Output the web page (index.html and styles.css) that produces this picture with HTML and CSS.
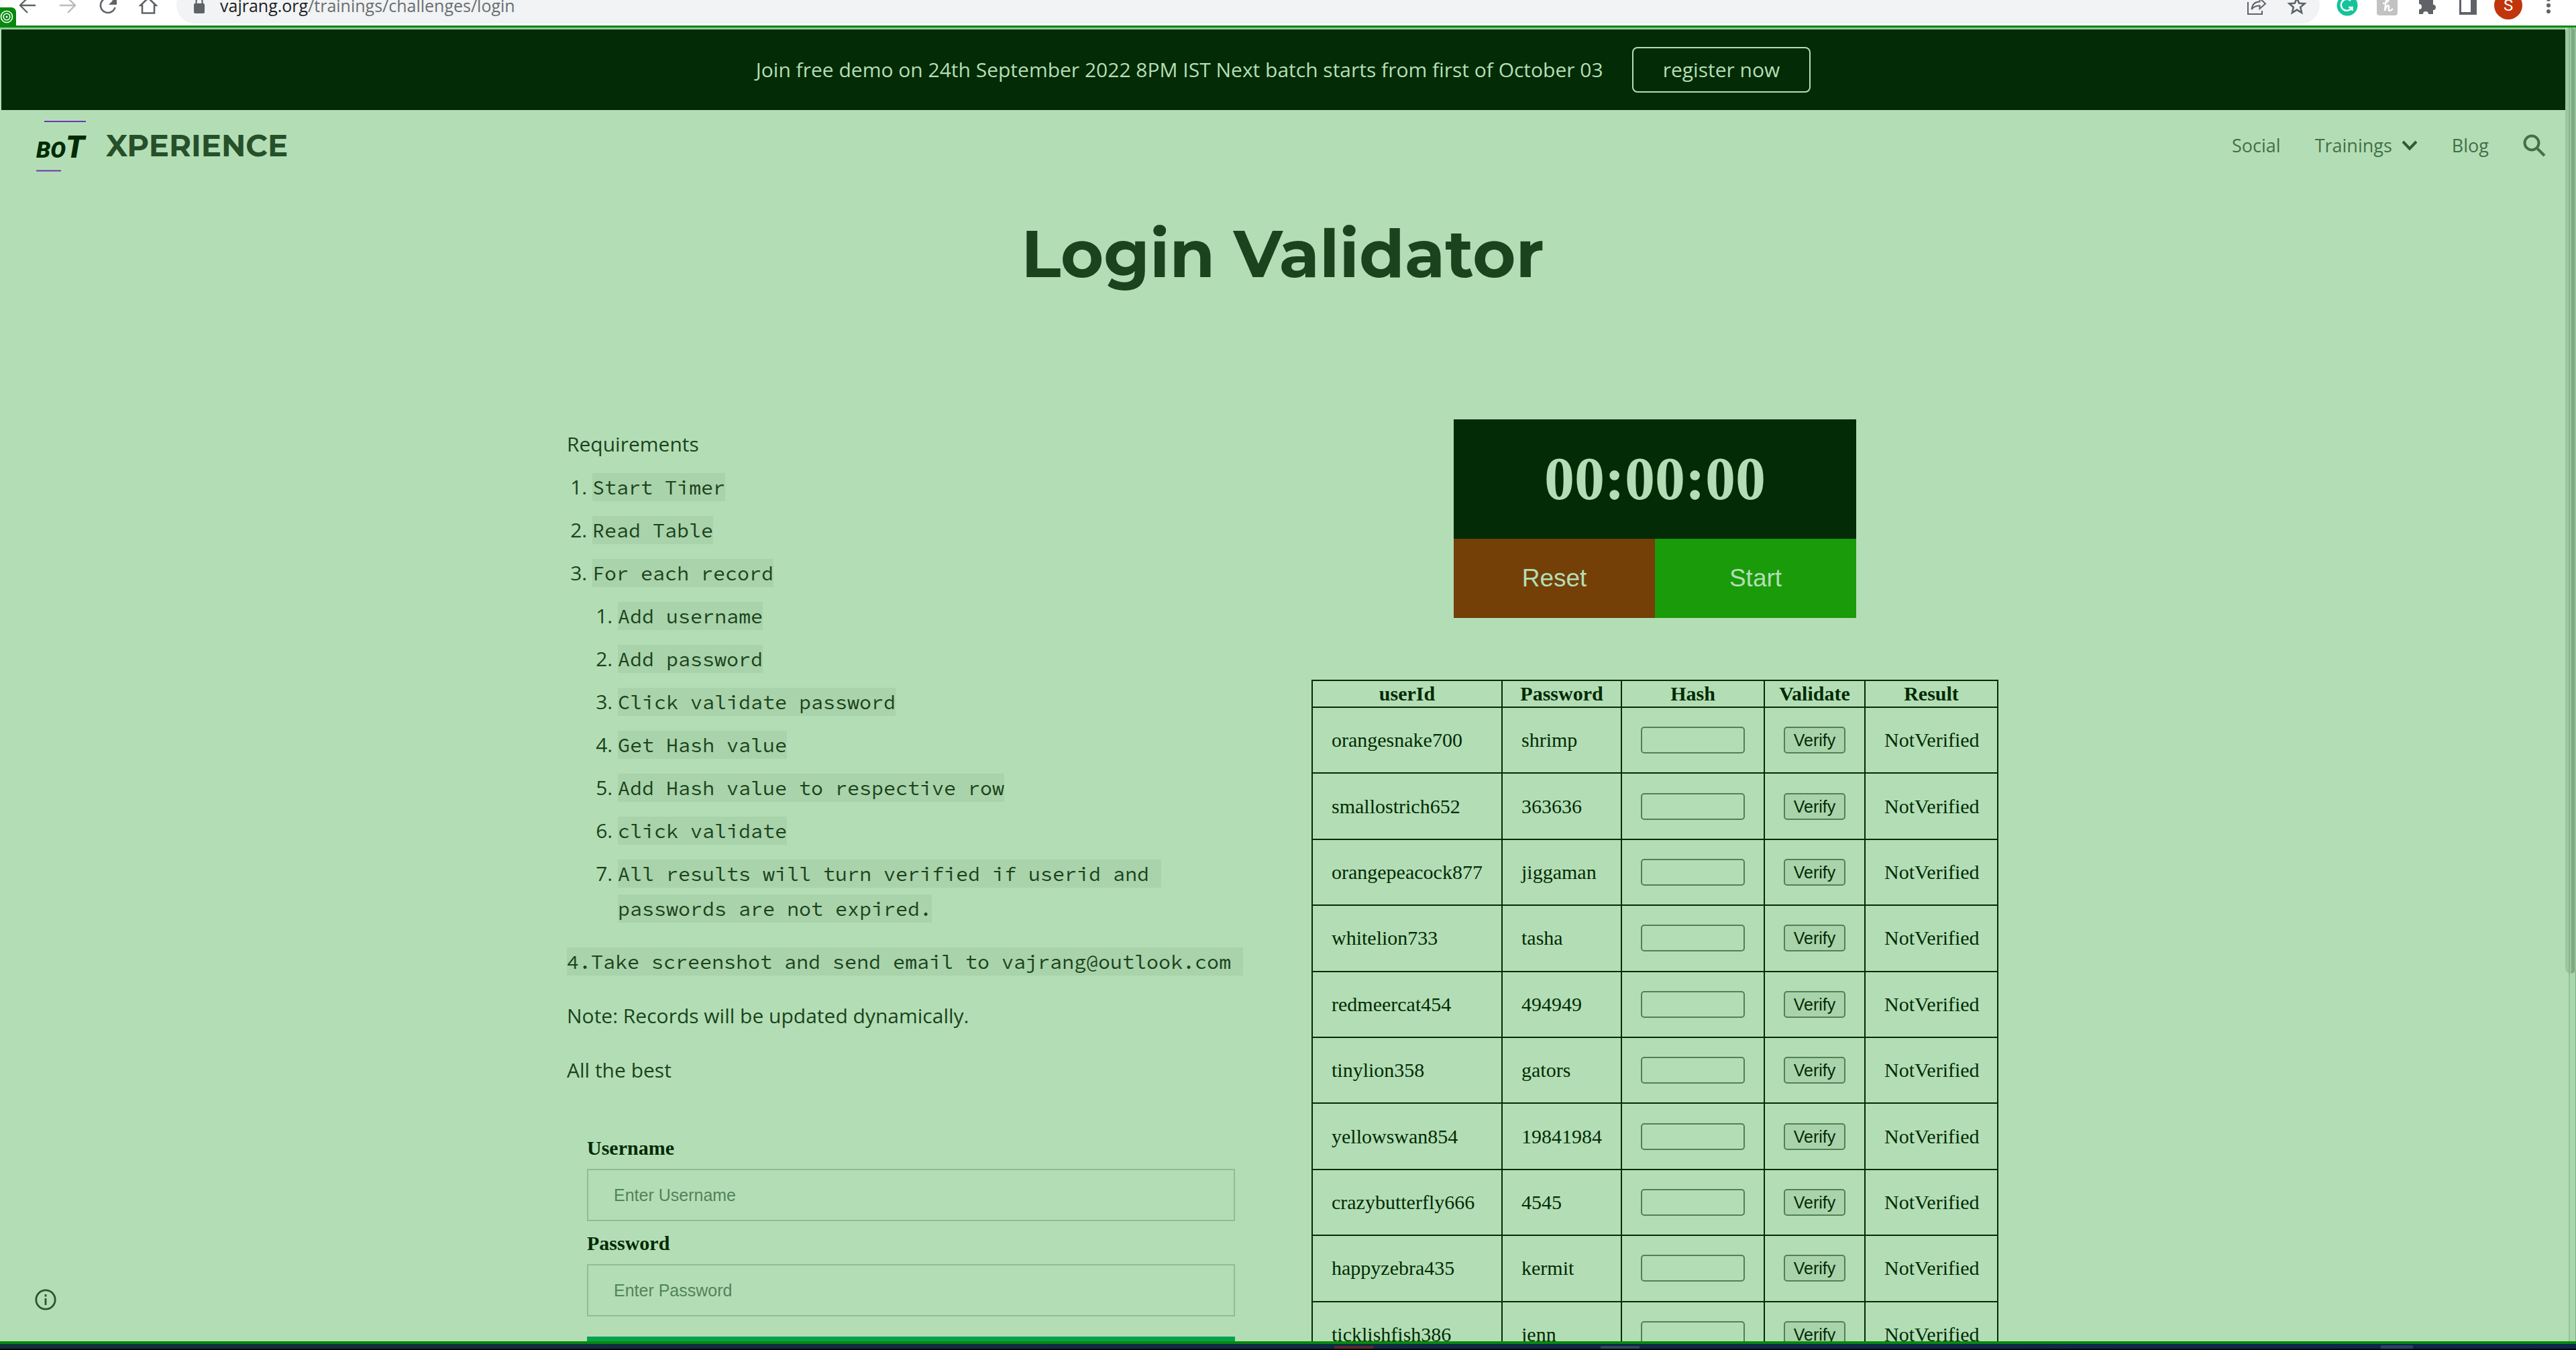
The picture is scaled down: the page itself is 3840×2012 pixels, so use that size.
FILE: index.html
```html
<!DOCTYPE html>
<html lang="en">
<head>
<meta charset="utf-8">
<title>Login Validator</title>
<link rel="stylesheet" href="styles.css">
</head>
<body>
<div class="toolbar">
  <button class="tool" aria-label="Back"><svg width="28" height="28" viewBox="0 0 28 28" fill="none" stroke="#5f6368" stroke-width="2.4"><path d="M26 14H4M14 3L3 14l11 11"/></svg></button>
  <button class="tool" aria-label="Forward"><svg width="28" height="28" viewBox="0 0 28 28" fill="none" stroke="#babcbe" stroke-width="2.4"><path d="M2 14h22M14 3l11 11-11 11"/></svg></button>
  <button class="tool" aria-label="Reload"><svg width="28" height="28" viewBox="0 0 28 28"><path d="M24.500 17A11 11 0 1 1 21.500 6" fill="none" stroke="#5f6368" stroke-width="2.600"/><path d="M27 1v12H15z" fill="#5f6368"/></svg></button>
  <button class="tool" aria-label="Home"><svg width="28" height="28" viewBox="0 0 28 28" fill="none" stroke="#5f6368" stroke-width="2.600"><path d="M2.500 14L14 3l11.500 11H23v11.500H5V14z"/></svg></button>
  <div class="omnibox">
    <svg width="16" height="26" viewBox="0 0 16 26"><path d="M3.500 11V7a4.500 4.500 0 0 1 9 0v4" fill="none" stroke="#5f6368" stroke-width="2.200"/><rect y="10" width="16" height="15" rx="2" fill="#5f6368"/></svg>
    <span class="url">vajrang.org<span class="path">/trainings/challenges/login</span></span>
    <button class="tool" aria-label="Share"><svg width="30" height="30" viewBox="0 0 30 30" fill="none" stroke="#5f6368" stroke-width="2"><path d="M2 10v18h21v-5"/><path d="M7.500 21c1-8 5-11.500 12-11.500V4.500l8.500 8-8.500 7.500v-4.500c-6 0-9.500 2-12 5.500z"/></svg></button>
    <button class="tool" aria-label="Bookmark"><svg width="30" height="30" viewBox="0 0 30 30" fill="none" stroke="#5f6368" stroke-width="2.600"><path d="M15 4l3.200 7.700 8.300.7-6.300 5.400 1.900 8.200-7.100-4.400-7.100 4.400 1.900-8.200-6.300-5.400 8.300-.7z"/></svg></button>
  </div>
  <button class="tool" aria-label="Grammar checker"><svg width="32" height="32" viewBox="0 0 32 32"><circle cx="16" cy="16" r="15.500" fill="#15c39a"/><path d="M21 9a8.500 8.500 0 1 0 2 10h-5m5.500 5v-5.500" fill="none" stroke="#fff" stroke-width="2.400"/></svg></button>
  <button class="tool" aria-label="Coupons"><svg width="32" height="32" viewBox="0 0 32 32"><rect width="31" height="31" rx="4" fill="#c2c2c2"/><path d="M9 13c7 0 10-5 8-7-3-2-4 8-5 18 2-7 5-9 6-7s-2 7 1 7c2 0 3-1 5-3" fill="none" stroke="#fff" stroke-width="2.400"/></svg></button>
  <button class="tool" aria-label="Extensions"><svg width="28" height="28" viewBox="0 0 28 28"><path d="M1 6h6a4 4 0 0 1 9 0h6v7a4 4 0 0 1 0 8v6h-7a4 4 0 0 0-8 0H1v-7a4 4 0 0 0 0-8z" fill="#5f6368"/></svg></button>
  <button class="tool" aria-label="Side panel"><svg width="26" height="28" viewBox="0 0 26 28"><path fill="#5f6368" fill-rule="evenodd" d="M0 0h26v28H0zM3 3v21h14V3z"/></svg></button>
  <button class="tool" aria-label="Profile"><span class="avatar">S</span></button>
  <button class="tool" aria-label="Menu"><svg width="6" height="26" viewBox="0 0 6 26" fill="#5f6368"><circle cx="3" cy="4" r="3"/><circle cx="3" cy="13" r="3"/><circle cx="3" cy="22" r="3"/></svg></button>
</div>
<div class="badge"><svg width="20" height="20" viewBox="0 0 20 20" fill="none" stroke="#fff" stroke-width="1.600"><circle cx="10" cy="10" r="8.500"/><circle cx="10" cy="10" r="4.800"/><circle cx="10" cy="10" r="1.500" fill="#fff" stroke="none"/></svg></div>
<div class="frame">
  <div class="page">
    <div class="banner">
      <span>Join free demo on 24th September 2022 8PM IST Next batch starts from first of October 03</span>
      <a class="register" href="#">register now</a>
    </div>
    <header class="header">
      <a class="brand" href="#">
        <svg width="78" height="78" viewBox="0 0 78 78"><path d="M13 3h62M1 76.500h37" stroke="#7332b4" stroke-width="2"/><text class="logo-text" x="1" y="57" font-size="34">BO<tspan font-size="46">T</tspan></text></svg>
        <span>XPERIENCE</span>
      </a>
      <nav class="nav">
        <a href="#">Social</a>
        <a href="#">Trainings<svg width="24" height="16" viewBox="0 0 24 16" fill="none" stroke="#2f5d33" stroke-width="4"><path d="M2 2l10 10.500L22 2"/></svg></a>
        <a href="#">Blog</a>
        <button class="search" aria-label="Search"><svg width="34" height="34" viewBox="0 0 34 34" fill="none" stroke="#456f48" stroke-width="4"><circle cx="13" cy="13" r="10.500"/><path d="M20.500 20.500L32 32"/></svg></button>
      </nav>
    </header>
    <h1 class="title">Login Validator</h1>
    <main class="content">
      <section class="requirements">
        <p class="lead">Requirements</p>
        <ol class="steps">
          <li><code>Start Timer</code></li>
          <li><code>Read Table</code></li>
          <li><code>For each record</code>
            <ol class="steps">
              <li><code>Add username</code></li>
              <li><code>Add password</code></li>
              <li><code>Click validate password</code></li>
              <li><code>Get Hash value</code></li>
              <li><code>Add Hash value to respective row</code></li>
              <li><code>click validate</code></li>
              <li><code>All results will turn verified if userid and passwords are not expired.</code></li>
            </ol>
          </li>
        </ol>
        <p><code>4.Take screenshot and send email to vajrang@outlook.com </code></p>
        <p>Note: Records will be updated dynamically.</p>
        <p>All the best</p>
        <form class="login">
          <label for="username">Username</label>
          <input id="username" type="text" placeholder="Enter Username">
          <label for="password">Password</label>
          <input id="password" type="password" placeholder="Enter Password">
          <button type="button" aria-label="Validate password"></button>
        </form>
      </section>
      <section class="records">
        <div class="timer">
          <div class="clock">00:00:00</div>
          <div class="controls"><button class="reset">Reset</button><button class="start">Start</button></div>
        </div>
        <table class="users">
          <colgroup><col class="c-user"><col class="c-pass"><col class="c-hash"><col class="c-validate"><col class="c-result"></colgroup>
          <thead><tr><th>userId</th><th>Password</th><th>Hash</th><th>Validate</th><th>Result</th></tr></thead>
          <tbody>
            <tr><td>orangesnake700</td><td>shrimp</td><td><input type="text" aria-label="Hash"></td><td><button>Verify</button></td><td>NotVerified</td></tr>
            <tr><td>smallostrich652</td><td>363636</td><td><input type="text" aria-label="Hash"></td><td><button>Verify</button></td><td>NotVerified</td></tr>
            <tr><td>orangepeacock877</td><td>jiggaman</td><td><input type="text" aria-label="Hash"></td><td><button>Verify</button></td><td>NotVerified</td></tr>
            <tr><td>whitelion733</td><td>tasha</td><td><input type="text" aria-label="Hash"></td><td><button>Verify</button></td><td>NotVerified</td></tr>
            <tr><td>redmeercat454</td><td>494949</td><td><input type="text" aria-label="Hash"></td><td><button>Verify</button></td><td>NotVerified</td></tr>
            <tr><td>tinylion358</td><td>gators</td><td><input type="text" aria-label="Hash"></td><td><button>Verify</button></td><td>NotVerified</td></tr>
            <tr><td>yellowswan854</td><td>19841984</td><td><input type="text" aria-label="Hash"></td><td><button>Verify</button></td><td>NotVerified</td></tr>
            <tr><td>crazybutterfly666</td><td>4545</td><td><input type="text" aria-label="Hash"></td><td><button>Verify</button></td><td>NotVerified</td></tr>
            <tr><td>happyzebra435</td><td>kermit</td><td><input type="text" aria-label="Hash"></td><td><button>Verify</button></td><td>NotVerified</td></tr>
            <tr><td>ticklishfish386</td><td>jenn</td><td><input type="text" aria-label="Hash"></td><td><button>Verify</button></td><td>NotVerified</td></tr>
          </tbody>
        </table>
      </section>
    </main>
    <button class="info" aria-label="Page information"><svg width="32" height="32" viewBox="0 0 32 32" fill="none" stroke="#2a552e" stroke-width="2.800"><circle cx="16" cy="16" r="14.200"/><path d="M16 14v10M16 8v3.500"/></svg></button>
  </div>
  <div class="scrollbar"><div class="thumb"></div></div>
</div>
<div class="taskbar"></div>
</body>
</html>
```
FILE: styles.css
```css
* { box-sizing: border-box; }

body {
  margin: 0;
  height: 100vh;
  display: flex;
  flex-direction: column;
  overflow: hidden;
  position: relative;
  background: #b3deb5;
  color: #1b431d;
  font: 30px/52px "Open Sans", sans-serif;
}

button { border: 0; padding: 0; background: none; font: inherit; color: inherit; }
a { color: inherit; text-decoration: none; }
svg { display: block; flex: none; }
p { margin: 0 0 29px; }

/* Browser toolbar, scrolled partly off the top edge */
.toolbar {
  flex: none;
  display: flex;
  align-items: center;
  height: 60px;
  margin-top: -22px;
  padding: 0 11px;
  background: #fff;
}
.tool { flex: none; width: 60px; height: 60px; display: flex; align-items: center; justify-content: center; }
.omnibox {
  flex: 1;
  display: flex;
  align-items: center;
  height: 54px;
  margin: 0 11px 0 12px;
  padding: 0 4px 0 26px;
  border-radius: 27px;
  background: #f1f3f4;
}
.url { flex: 1; margin-left: 23px; color: #202124; font-size: 25px; }
.path { color: #6a6e72; }
.avatar { width: 42px; height: 42px; border-radius: 50%; background: #c0350c; color: #fff; font: 24px/42px Roboto, sans-serif; text-align: center; }
.badge {
  position: absolute;
  left: 0;
  top: 11px;
  width: 24px;
  height: 28px;
  padding-top: 4px;
  border-radius: 0 7px 0 0;
  background: #078a0c;
}

/* Highlighted browser window */
.frame {
  flex: 1;
  min-height: 0;
  display: flex;
  border-top: 3px solid #078a0c;
  overflow: hidden;
}
.page { flex: 1; position: relative; border-top: 3px solid #93c79b; overflow: hidden; }

.banner {
  display: flex;
  align-items: center;
  justify-content: center;
  gap: 43px;
  height: 120px;
  margin-left: 2px;
  background: #032b05;
  color: #b3deb5;
  font-size: 30px;
}
.register {
  height: 68px;
  padding: 0 44px;
  border: 2px solid #b3deb5;
  border-radius: 8px;
  line-height: 64px;
}

.header {
  display: flex;
  align-items: center;
  justify-content: space-between;
  height: 106px;
  padding: 0 29px 0 53px;
}
.brand { display: flex; align-items: center; gap: 27px; color: #26502a; font: 700 45px/60px Montserrat, Inter, sans-serif; }
.logo-text { fill: #032b05; font-family: Roboto, sans-serif; font-weight: 900; font-style: italic; }
.nav { display: flex; align-items: center; gap: 51px; color: #456f48; font-size: 27px; }
.nav a { display: flex; align-items: center; gap: 14px; }

.title {
  margin: 0;
  padding-top: 38px;
  color: #1b431d;
  font: 700 98px/140px Montserrat, Inter, sans-serif;
  text-align: center;
}

.content {
  display: grid;
  grid-template-columns: minmax(0, 1fr) minmax(0, 1fr);
  gap: 86px;
  max-width: 2134px;
  margin: 177px auto 0;
}
.requirements { padding-top: 11px; }
.lead { margin-bottom: 12px; }
code {
  padding: 2px 0;
  background: #a9d3aa;
  font: 30px/52px "Source Code Pro", "Liberation Mono", monospace;
  white-space: pre-wrap;
}
.steps { margin: 0 0 27px; padding-left: 38px; }
.steps li { margin-bottom: 12px; }
.steps .steps { margin: 12px 0 0; }
.steps li:last-child { margin-bottom: 0; }

.login { display: flex; flex-direction: column; padding: 44px 28px 0 30px; }
.login label { color: #032b05; font: 700 30px/34px "Liberation Serif", serif; }
.login input {
  height: 78px;
  margin: 14px 0 16px;
  padding: 0 38px;
  border: 2px solid #90bd94;
  background: transparent;
  font: 25px/30px "Liberation Sans", sans-serif;
}
.login input::placeholder { color: #54835a; opacity: 1; }
.login button { height: 90px; margin-top: 14px; background: #05a14e; }

.timer { width: 600px; margin: 0 auto; color: #b3deb5; text-align: center; }
.clock { background: #032b05; font: 700 90px/178px "Liberation Serif", serif; }
.controls { display: flex; }
.controls button { flex: 1; font: 37px/118px "Liberation Sans", sans-serif; }
.reset { background: #744008; }
.start { background: #1a9b0a; }

.users {
  width: 100%;
  height: 1026px;
  margin-top: 92px;
  border-collapse: collapse;
  table-layout: fixed;
  color: #032b05;
  font: 30px/34px "Liberation Serif", serif;
}
.users th, .users td { border: 2px solid #032b05; }
.users th { height: 40px; padding: 0; }
.users td { height: 98px; padding: 0 28px; text-align: left; }
.c-user { width: 283px; }
.c-pass { width: 178px; }
.c-hash { width: 213px; }
.c-validate { width: 150px; }
.users input, .users button {
  display: block;
  width: 100%;
  height: 40px;
  border: 2px solid #547f57;
  border-radius: 5px;
  background: transparent;
}
.users button { background: #a9d3aa; font: 25px/34px "Liberation Sans", sans-serif; }

.info { position: absolute; left: 52px; bottom: 46px; }

.scrollbar { flex: none; width: 16px; background: linear-gradient(90deg, #b3deb5 5px, #97c299 5px 7px, #abd5ad 7px 15px, #72b876 15px); }
.thumb { height: 72%; border-radius: 8px; background: linear-gradient(90deg, #9bc79f 5px, #8bb68e 5px 7px, #9bc79f 7px 9px, #7fa982 9px 14px, #93c79b 14px); }

/* Top sliver of the system taskbar with the tips of three app tiles */
.taskbar {
  flex: none;
  height: 13px;
  border-top: 4px solid #078a0c;
  border-bottom: 2px solid #000;
  background:
    linear-gradient(#5a2a2c, #5a2a2c) 52.6% 100% / 58px 4px no-repeat,
    linear-gradient(#2c4a5c, #2c4a5c) 63.1% 100% / 58px 4px no-repeat,
    linear-gradient(#2b4068, #2b4068) 93.6% 100% / 48px 5px no-repeat,
    linear-gradient(90deg, #122f3a, #10244d);
}
```
